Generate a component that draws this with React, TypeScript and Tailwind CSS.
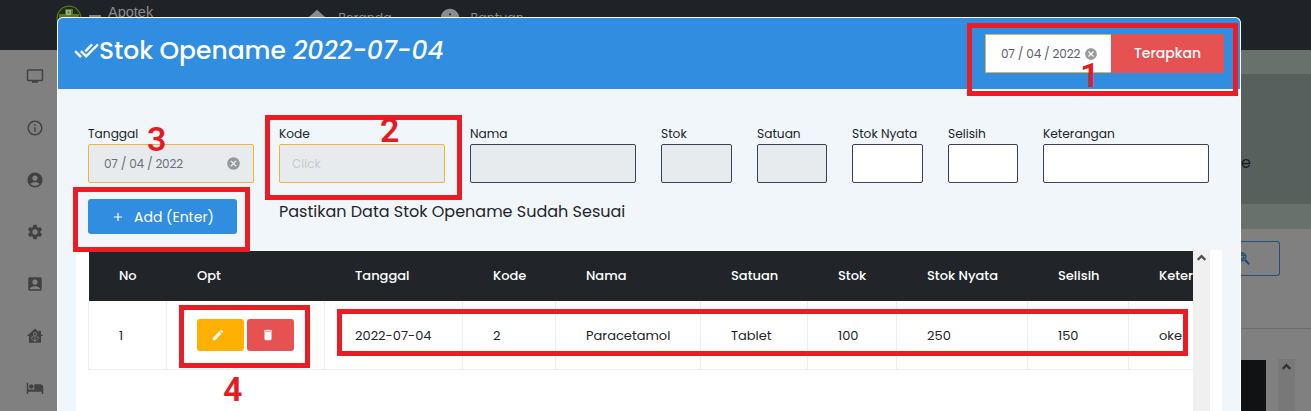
import React from "react";
import { MdTv, MdInfoOutline, MdAccountCircle, MdSettings, MdAccountBox, MdHotel, MdHome, MdInfo, MdCancel, MdEdit, MdDelete, MdAdd } from "react-icons/md";

function Field({ name, width, tone, children }: { name: string; width: string; tone: string; children?: React.ReactNode }) {
  return (
    <div className={"flex shrink-0 flex-col " + width}>
      <span className="pb-[1px] text-[12.2px] leading-[18px] whitespace-nowrap text-[#212529]">{name}</span>
      <div className={"flex h-[39px] items-center rounded-[2px] border " + tone}>{children}</div>
    </div>
  );
}

const columns = [
  { w: "w-[78px]", h: "No", v: "1" },
  { w: "w-[158px]", h: "Opt", v: "" },
  { w: "w-[138px]", h: "Tanggal", v: "2022-07-04" },
  { w: "w-[93px]", h: "Kode", v: "2" },
  { w: "w-[145px]", h: "Nama", v: "Paracetamol" },
  { w: "w-[107px]", h: "Satuan", v: "Tablet" },
  { w: "w-[89px]", h: "Stok", v: "100" },
  { w: "w-[131px]", h: "Stok Nyata", v: "250" },
  { w: "w-[101px]", h: "Selisih", v: "150" },
  { w: "w-[120px]", h: "Keterangan", v: "oke" },
];

function HomeFlower() {
  return (
    <svg viewBox="0 0 24 24" className="h-[18px] w-[18px]">
      <path d="M12 2 1 12h3v9h16v-9h3l-3-2.700V5h-3v1.500z" fill="#424242" />
      <g fill="none" stroke="#7a7a7a" strokeWidth="1.300">
        <circle cx="12" cy="9.500" r="2.200" />
        <path d="M12 12v8M7 13.500c0 3 2 4.500 5 4.500 3 0 5-1.500 5-4.500M9 12v2.500M15 12v2.500" />
      </g>
    </svg>
  );
}

function ScrollArrow() {
  return (
    <svg viewBox="0 0 17 17" className="h-[17px] w-[17px]" fill="none" stroke="currentColor" strokeWidth="2.200">
      <path d="M4.700 9.900 8.500 6.100 12.300 9.900" />
    </svg>
  );
}

export default function App() {
  return (
    <div className="relative h-[411px] w-[1311px] overflow-hidden bg-[#808080] font-['Poppins','Inter',sans-serif] text-[#212529]">
      <header className="flex h-[50px] bg-[#1f2327] text-[#8a8d8f]">
        <div className="ml-[56px] flex pt-[5px]">
          <svg viewBox="0 0 26 26" className="h-[26px] w-[26px]">
            <circle cx="13" cy="13" r="11.800" fill="#20291b" stroke="#527b20" strokeWidth="1.300" />
            <path d="M9 4h8v5h6v4H3V9h6z" fill="#527b20" />
            <path d="M10 5h5v5h-5z" fill="#a5ac92" />
            <path d="M11.500 6.500h2v2h-2z" fill="#527b20" />
          </svg>
          <span className="mt-[10px] ml-[7px] h-[2px] w-3 bg-[#808386]" />
          <span className="ml-[7px] font-['Liberation_Sans',sans-serif] text-[14.500px] leading-[14px]">Apotek</span>
        </div>
        <div className="ml-[153px] flex h-8 items-start pt-[7px] text-[12.500px]">
          <MdHome className="h-[22px] w-[22px]" /><span className="ml-[10px] pt-[2px]">Beranda</span>
          <MdInfo className="ml-[47px] h-[22px] w-[22px]" /><span className="ml-[10px] pt-[2px]">Bantuan</span>
        </div>
      </header>

      <div className="flex h-[361px] justify-between">
        <nav className="flex w-[57px] flex-col items-center gap-[34px] pt-[17px] pl-[13px] text-[#424242]">
          <MdTv className="h-[18px] w-[18px]" />
          <MdInfoOutline className="h-[18px] w-[18px]" />
          <MdAccountCircle className="h-[18px] w-[18px]" />
          <MdSettings className="h-[18px] w-[18px]" />
          <MdAccountBox className="h-[18px] w-[18px]" />
          <HomeFlower />
          <MdHotel className="h-[18px] w-[18px]" />
        </nav>
        <aside className="flex w-[71px] flex-col">
          <div className="h-6 bg-[#69716d]" />
          <div className="flex h-[130px] items-start bg-[#58605e] pt-[77px] pl-[1px] text-[16px] leading-[24px] text-[#181b1d]">e</div>
          <div className="h-[25px] bg-[#69716d]" />
          <div className="mt-[12px] flex h-[35px] w-10 items-center rounded-r-[3px] border border-l-0 border-[#244f78] text-[#244f78]">
            <svg viewBox="0 0 24 24" className="-ml-[3px] h-[13px] w-[13px]" fill="none" stroke="currentColor" strokeWidth="2.200">
              <circle cx="9" cy="9" r="7.500" /><path d="M2 6.500h14M2 11.500h14M9 2c-4 4-4 10 0 14M9 2c4 4 4 10 0 14" /><path d="m15 15 7.500 7.500" strokeWidth="4" />
            </svg>
          </div>
          <div className="mt-[52px] h-px bg-[#6c6c6c]" />
          <div className="mt-[30px] flex flex-1">
            <div className="mt-[1px] w-[26px] bg-[#111214]" />
            <div className="ml-[12px] w-[17px] bg-[#787878] text-[#333]"><ScrollArrow /></div>
          </div>
        </aside>
      </div>

      <main className="absolute top-[17px] left-[57px] flex h-[394px] w-[1184px] flex-col overflow-hidden rounded-t-[6px] border border-b-0 border-white bg-[#f1f6fa]">
        <div className="flex h-[71px] shrink-0 items-start justify-between bg-[#308de0] pr-[16px] text-white">
          <h1 className="ml-[16px] flex pt-[14px] text-[25px] leading-[38px] font-medium whitespace-nowrap">
            <svg viewBox="0 0 24 24" className="mt-[6px] h-[25px] w-[25px]" fill="currentColor" stroke="currentColor" strokeWidth=".4">
              <path d="M.41 13.410 6 19l1.410-1.420L1.830 12M22.240 5.580 11.660 16.170 7.500 12l-1.430 1.410L11.660 19l12-12M18 7l-1.410-1.420-6.350 6.350 1.420 1.410L18 7Z" />
            </svg>
            <span className="tracking-[-.03px]">Stok Opename</span><em className="ml-[7px]">2022-07-04</em>
          </h1>
          <div className="mt-[16px] flex h-[39px] overflow-hidden rounded-[2px]">
            <div className="flex w-[126px] items-center border border-r-0 border-[#d8b457] bg-white pl-[15px] text-[12px] text-[#5a6067]">
              <span className="w-[80px] tracking-[-.18px] whitespace-nowrap">07 / 04 / 2022</span><MdCancel className="ml-[3px] h-[14px] w-[14px] text-[#999]" />
            </div>
            <button className="w-[113px] bg-[#e65252] text-[14px] font-medium">Terapkan</button>
          </div>
        </div>

        <section className="mt-[36px] ml-[30px] flex shrink-0 gap-[25px]">
          <Field name="Tanggal" width="w-[166px]" tone="border-[#efb43b] bg-[#e8ebee]">
            <span className="ml-[15px] w-[122px] text-[12px] tracking-[-.2px] text-[#6c7075]">07 / 04 / 2022</span><MdCancel className="h-[15px] w-[15px] text-[#999]" />
          </Field>
          <Field name="Kode" width="w-[166px]" tone="border-[#efb43b] bg-[#e8ebee]"><span className="ml-[12px] text-[12px] text-[#c9cbcd]">Click</span></Field>
          <Field name="Nama" width="w-[166px]" tone="border-[#3b3f5c] bg-[#e8ebee]" />
          <Field name="Stok" width="w-[71px]" tone="border-[#3b3f5c] bg-[#e8ebee]" />
          <Field name="Satuan" width="w-[70px]" tone="border-[#3b3f5c] bg-[#e8ebee]" />
          <Field name="Stok Nyata" width="w-[71px]" tone="border-[#3b3f5c] bg-white" />
          <Field name="Selisih" width="w-[70px]" tone="border-[#3b3f5c] bg-white" />
          <Field name="Keterangan" width="w-[166px]" tone="border-[#3b3f5c] bg-white" />
        </section>

        <section className="mt-[16px] ml-[30px] flex h-[51px] shrink-0 items-start">
          <button className="flex h-[35px] w-[149px] items-center rounded-[3px] bg-[#308de0] pl-[23px] text-white">
            <MdAdd className="h-[14px] w-[14px]" /><span className="ml-[9px] pt-[1px] text-[14px] whitespace-nowrap">Add (Enter)</span>
          </button>
          <p className="ml-[42px] text-[16px] leading-[25px]">Pastikan Data Stok Opename Sudah Sesuai</p>
        </section>

        <section className="ml-[18px] flex w-[1146px] flex-1 bg-white pl-[12px]">
          <div className="w-[1105px] shrink-0 overflow-hidden pt-[1px]">
            <div className="ml-[1px] flex h-[50px] w-[1160px] bg-[#212529] text-[13px] leading-[49px] font-medium text-white">
              {columns.map((c) => <div key={c.h} className={"shrink-0 pl-[30px] whitespace-nowrap " + c.w}>{c.h}</div>)}
            </div>
            <div className="flex h-[69px] w-[1161px] border-b border-l border-[#eee] text-[13px] leading-[69px]">
              {columns.map((c) => (
                <div key={c.h} className={"flex shrink-0 items-center border-r border-[#eee] pl-[30px] whitespace-nowrap " + c.w}>
                  {c.h === "Opt" ? (
                    <div className="flex gap-[3px] text-white">
                      <button className="flex h-8 w-[47px] items-center rounded-[3px] bg-[#ffb000] pl-[14px]"><MdEdit className="h-[14px] w-[14px]" /></button>
                      <button className="flex h-8 w-[47px] items-center rounded-[3px] bg-[#e65252] pl-[14px]"><MdDelete className="h-[14px] w-[14px]" /></button>
                    </div>
                  ) : c.v}
                </div>
              ))}
            </div>
          </div>
          <div className="w-[17px] bg-[#f0f0f0] text-[#505050]"><ScrollArrow /></div>
        </section>
      </main>

      <div className="absolute top-[23px] left-[967px] h-[73px] w-[271px] border-5 border-[#ea1c24]" />
      <div className="absolute top-[115px] left-[265px] h-[85px] w-[197px] border-5 border-[#ea1c24]" />
      <div className="absolute top-[187px] left-[73px] h-[65px] w-[177px] border-5 border-[#ea1c24]" />
      <div className="absolute top-[305px] left-[179px] h-[63px] w-[131px] border-5 border-[#ea1c24]" />
      <div className="absolute top-[309px] left-[337px] h-[47px] w-[851px] border-5 border-[#ea1c24]" />
      <div className="font-['Roboto',sans-serif] text-[34px] leading-[40px] font-semibold text-[#e31b23]">
        <span className="absolute top-[55px] left-[1080px]">1</span>
        <span className="absolute top-[110px] left-[380px]">2</span>
        <span className="absolute top-[119px] left-[147px]">3</span>
        <span className="absolute top-[369px] left-[223px]">4</span>
      </div>
    </div>
  );
}
